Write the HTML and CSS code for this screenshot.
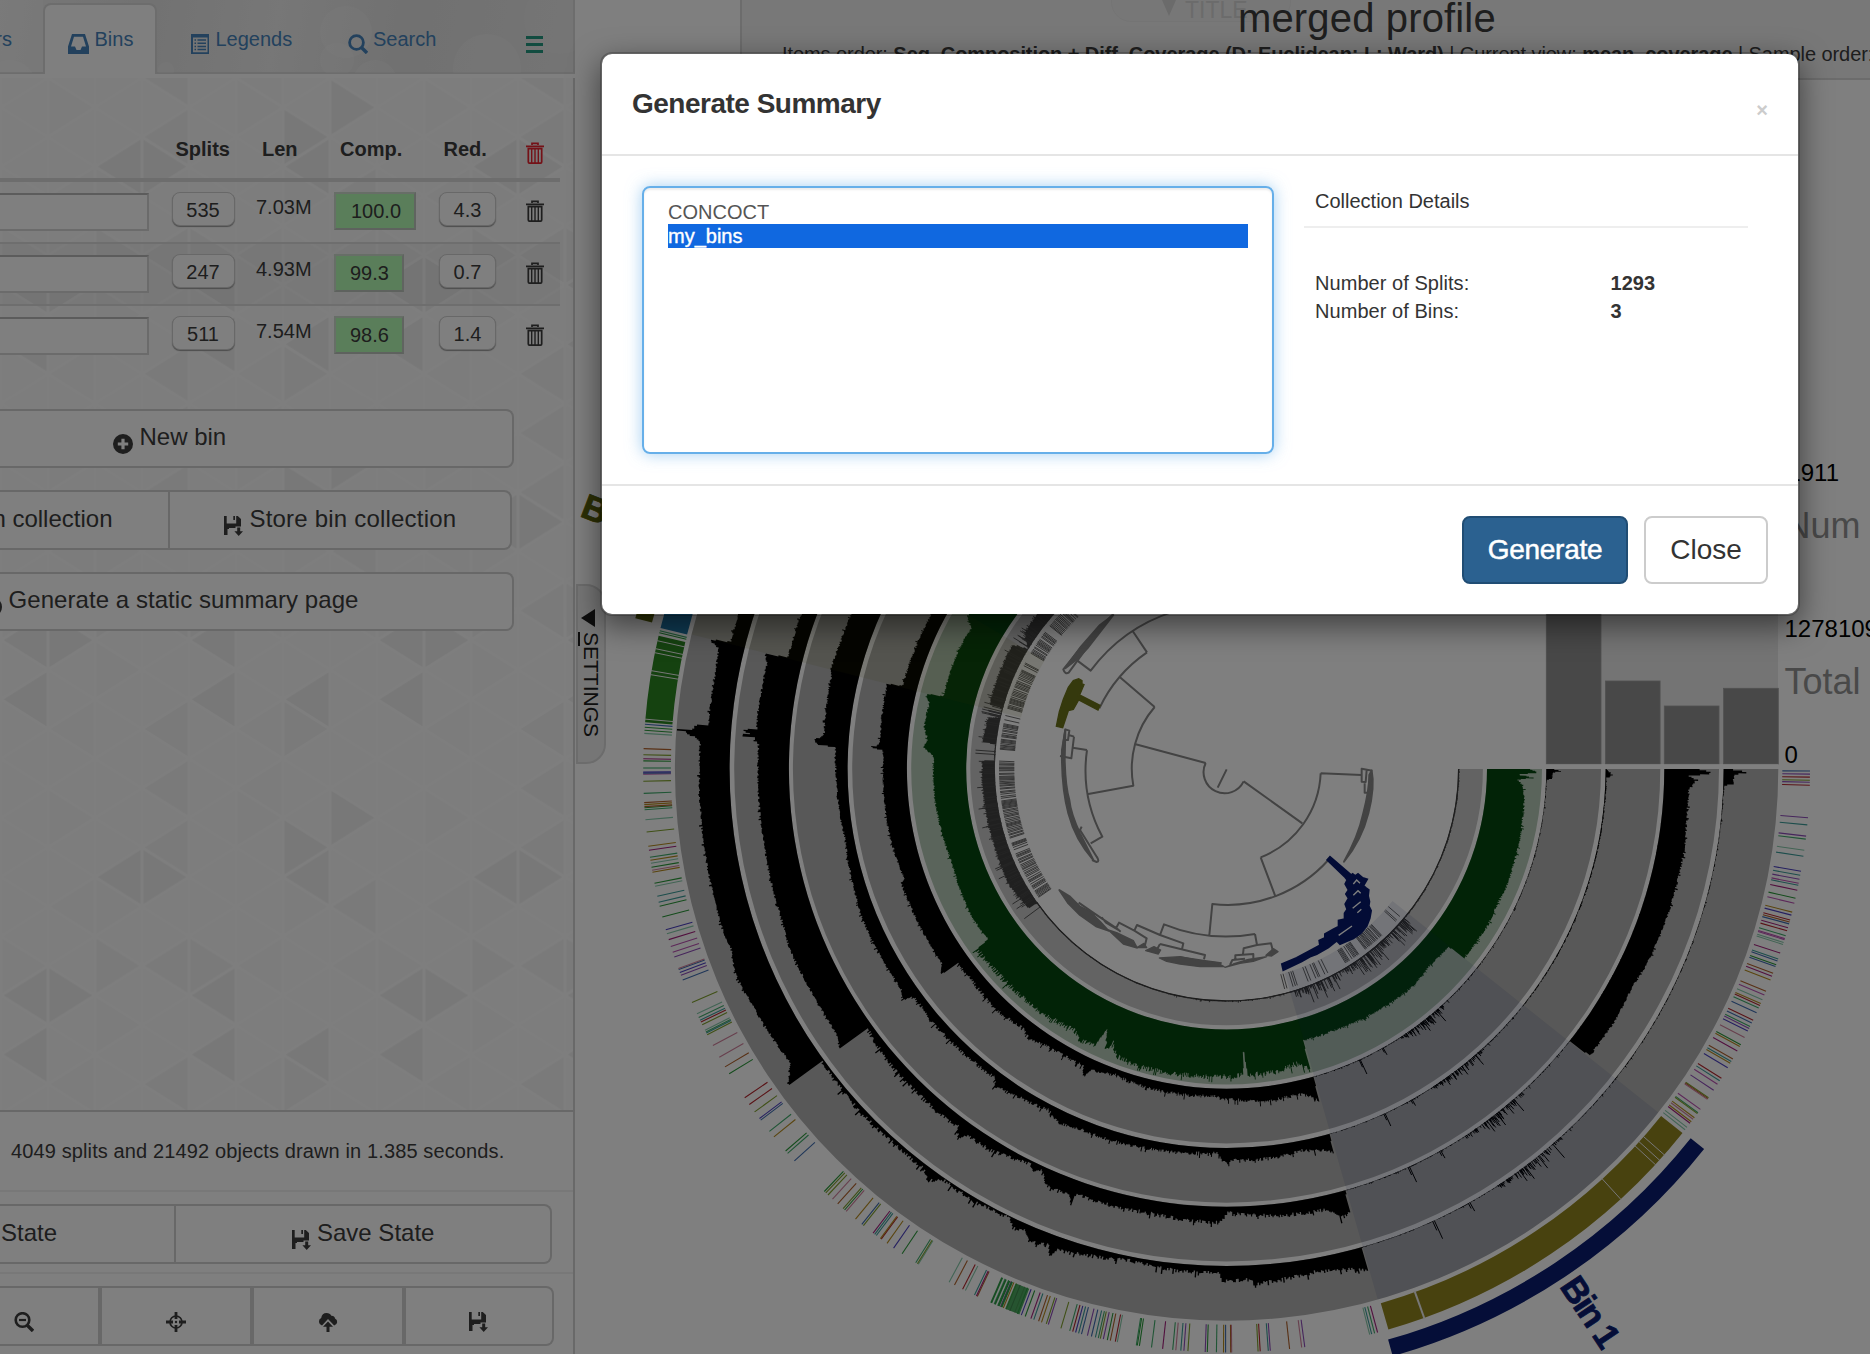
FILE: index.html
```
<!DOCTYPE html>
<html lang="en">
<head>
<meta charset="utf-8">
<title>merged profile</title>
<link rel="stylesheet" href="styles.css">
</head>
<body>
<svg class="defs" width="0" height="0" aria-hidden="true">
  <symbol id="i-trash" viewBox="0 0 18 22"><path fill="none" stroke="currentColor" stroke-width="1.7" d="M6 3V1.4h6V3M0 4.3h18M2.3 6.6V20q0 1.1 1.1 1.1h11.2q1.1 0 1.1-1.1V6.600z"/><path stroke="currentColor" stroke-width="1.4" d="M5.700 7v14M9 7v14M12.300 7v14"/></symbol>
  <symbol id="i-save" viewBox="0 0 20 20"><path fill="currentColor" d="M1 0h2.700v7.500h9.500V0h1.600L18 3v7.500h-5.500v1.500H6V13H4.500v6H1zM10.300 0h1.700v4h-1.700zM14.200 11.500h3v3.700H20L15.700 20l-4.300-4.800h2.800z"/></symbol>
</svg>

<main class="app">
  <section class="panel">
    <nav class="tabs">
      <svg class="bokeh" viewBox="0 0 575 73" width="575" height="73"><g fill="#fff" fill-opacity=".2"><circle cx="346" cy="32" r="26"/><circle cx="337" cy="60" r="17"/><circle cx="487" cy="68" r="34"/><circle cx="375" cy="82" r="22"/><circle cx="166" cy="70" r="8"/><circle cx="10" cy="86" r="26"/><circle cx="560" cy="18" r="36" fill-opacity=".1"/></g></svg>
      <span class="tab tab-layers">Layers</span>
      <span class="tab tab-bins"><svg viewBox="0 0 21 20" width="21" height="20"><path fill="currentColor" fill-rule="evenodd" d="M4 0h13l4 12.500V20H0v-7.500zM6 2.800L3 12.500h4l1.500 3.500h4l1.500-3.500h4L15 2.800z"/></svg>Bins</span>
      <span class="tab tab-legends"><svg viewBox="0 0 18.500 20" width="18.500" height="20"><path fill="currentColor" fill-rule="evenodd" d="M0 0h18.500v20H0zM2 3.500v14.700h14.500V3.500z"/><path stroke="currentColor" stroke-width="1.500" d="M3.500 6H5M6.500 6H15M3.500 9.200H5M6.500 9.200H15M3.500 12.400H5M6.500 12.400H15M3.500 15.600H5M6.500 15.600H15"/></svg>Legends</span>
      <span class="tab tab-search"><svg viewBox="0 0 20 20" width="20" height="20"><circle cx="8.500" cy="8.500" r="6.900" fill="none" stroke="currentColor" stroke-width="2.800"/><path stroke="currentColor" stroke-width="3.400" d="M13 13l6 6"/></svg>Search</span>
      <span class="menu"><i></i><i></i><i></i></span>
    </nav>

    <div class="content">
      <svg class="tiles" id="tiles" width="573" height="1032"></svg>
      <div class="bins">
        <div class="row head"><span></span><b class="h-splits">Splits</b><b class="h-len">Len</b><b class="h-comp">Comp.</b><b class="h-red">Red.</b><svg class="trash danger" width="18" height="22"><use href="#i-trash"/></svg></div>
        <div class="row"><span class="name"></span><span class="btn-sm splits">535</span><span class="len">7.03M</span><span class="comp wide">100.0</span><span class="btn-sm red">4.3</span><svg class="trash" width="18" height="22"><use href="#i-trash"/></svg></div>
        <div class="row even"><span class="name"></span><span class="btn-sm splits">247</span><span class="len">4.93M</span><span class="comp">99.3</span><span class="btn-sm red">0.7</span><svg class="trash" width="18" height="22"><use href="#i-trash"/></svg></div>
        <div class="row last"><span class="name"></span><span class="btn-sm splits">511</span><span class="len">7.54M</span><span class="comp">98.6</span><span class="btn-sm red">1.4</span><svg class="trash" width="18" height="22"><use href="#i-trash"/></svg></div>
      </div>
      <div class="actions">
        <div class="btn new"><svg width="20" height="20" viewBox="0 0 20 20"><circle cx="10" cy="10" r="10" fill="currentColor"/><path stroke="#fff" stroke-width="3.200" d="M10 4.800v10.400M4.800 10h10.400"/></svg>New bin</div>
        <div class="group">
          <div class="btn load">Load bin collection</div>
          <div class="btn store"><svg width="20" height="20"><use href="#i-save"/></svg>Store bin collection</div>
        </div>
        <div class="btn generate"><svg width="20" height="20" viewBox="0 0 20 20"><circle cx="10" cy="10" r="8" fill="none" stroke="currentColor" stroke-width="4"/></svg>Generate a static summary page</div>
      </div>
    </div>

    <footer class="foot">
      <p class="status">4049 splits and 21492 objects drawn in 1.385 seconds.</p>
      <div class="group states">
        <div class="btn load-state">State</div>
        <div class="btn save-state"><svg width="20" height="20"><use href="#i-save"/></svg>Save State</div>
      </div>
      <div class="tools">
        <div><svg width="20" height="20" viewBox="0 0 20 20"><circle cx="8.500" cy="8" r="6.800" fill="none" stroke="currentColor" stroke-width="2.600"/><path stroke="currentColor" stroke-width="3.400" d="M13 13l6 6"/><path stroke="currentColor" stroke-width="2.200" d="M5 8h7"/></svg></div>
        <div><svg width="20" height="20" viewBox="0 0 20 20"><circle cx="10" cy="10" r="6" fill="none" stroke="currentColor" stroke-width="1.700"/><path stroke="currentColor" stroke-width="2.800" d="M10 0v7M10 13v7M0 10h7M13 10h7"/><circle cx="10" cy="10" r="1.200" fill="currentColor"/></svg></div>
        <div><svg width="20" height="20" viewBox="0 0 20 20"><path fill="currentColor" d="M4 13.500a4 4 0 0 1-.8-7.500Q4 1 8.500 1q3.500 0 4.800 2.700 3.200-.2 3.700 2.800a3.700 3.700 0 0 1-.8 7L10 7z"/><path fill="currentColor" d="M10 9.500l5 5.200h-3.500V20h-3v-5.300H5z"/></svg></div>
        <div><svg width="20" height="20"><use href="#i-save"/></svg></div>
      </div>
    </footer>
  </section>

  <section class="stage">
    <svg class="plot" id="plot" viewBox="575 0 1295 1354" width="1295" height="1354"></svg>
    <div class="settings"><span class="arrow"></span><span class="vertical"><u>S</u>ETTINGS</span></div>
    <header class="title-bar">
      <div class="title-tab"><span class="down"></span>TITLE</div>
      <h1>merged profile</h1>
      <p>Items order: <b>Seq. Composition + Diff. Coverage (D: Euclidean; L: Ward)</b> | Current view: <b>mean_coverage</b> | Sample order: <b>custom</b></p>
    </header>
  </section>
</main>

<div class="backdrop"></div>

<div class="modal">
  <div class="modal-head"><h2>Generate Summary</h2><span class="close">×</span></div>
  <div class="modal-body">
    <div class="select"><div>CONCOCT</div><div class="selected">my_bins</div></div>
    <div class="details">
      <h3>Collection Details</h3>
      <dl><dt>Number of Splits:</dt><dd>1293</dd><dt>Number of Bins:</dt><dd>3</dd></dl>
    </div>
  </div>
  <div class="modal-foot"><span class="mbtn primary">Generate</span><span class="mbtn">Close</span></div>
</div>
<script src="plot.js"></script>
</body>
</html>
```
FILE: styles.css
```
* { box-sizing: border-box; }
body {
  margin: 0;
  width: 1870px;
  height: 1354px;
  overflow: hidden;
  background: #fff;
  color: #3c3c3c;
  font: 20px/28px "Liberation Sans", Arial, sans-serif;
}
h1, h2, h3, p, dl, dd { margin: 0; font-weight: normal; }
svg { display: block; flex: none; }
.defs { position: absolute; }
.app { display: flex; height: 1354px; }

/* settings panel */
.panel { width: 575px; flex: none; display: flex; flex-direction: column; overflow: hidden; }
.tabs {
  position: relative;
  height: 74px;
  flex: none;
  display: flex;
  background: linear-gradient(100deg, #f0f0f0, #e4e4e4 25%, #eee 48%, #e2e2e2 70%, #e9e9e9);
  border-bottom: 2px solid #dadada;
  border-right: 2px solid #d6d6d6;
}
.bokeh { position: absolute; left: 0; top: 0; }
.tab { position: relative; display: flex; color: #4683bb; white-space: nowrap; padding-top: 24.500px; }
.tab svg { margin-top: 9px; margin-right: 5.500px; }
.tab-layers { width: 42.500px; direction: rtl; padding-right: 30.500px; overflow: hidden; flex: none; background: rgba(255,255,255,.25); }
.tab-bins {
  width: 114.500px;
  height: 71px;
  flex: none;
  margin-top: 3px;
  padding: 20px 0 0 23.500px;
  background: #fff;
  border: 2px solid #dadada;
  border-bottom: 0;
  border-radius: 8px 8px 0 0;
  box-shadow: 0 3px 0 #fff;
}
.tab-legends { margin-left: 33.500px; width: 157px; }
.tab-legends svg { margin-right: 6.500px; }
.tab-search { width: 178px; }
.menu { position: relative; width: 17px; padding-top: 36px; display: flex; flex-direction: column; gap: 4px; }
.menu i { height: 3px; background: #249880; }

.content { position: relative; margin-top: 4px; height: 1032px; border-right: 2px solid #d2d2d2; }
.tiles { position: absolute; left: 0; top: 0; }
.bins, .actions { position: relative; }
.row {
  display: grid;
  grid-template-columns: 171.500px 84.500px 78px 105px 86.500px 34px;
  width: 560px;
  height: 62px;
  padding-top: 10px;
  border-bottom: 2px solid #dcdcdc;
}
.row.even { background: rgba(0,0,0,.035); }
.row.last { border-bottom: 0; }
.row.head { height: 104px; padding-top: 56.500px; border-bottom: 4px solid #dadada; }
.h-splits { padding-left: 4px; }
.h-len { padding-left: 6px; }
.h-comp { padding-left: 6px; }
.h-red { padding-left: 4.500px; }
.trash { margin-top: 8px; color: #3c3c3c; }
.trash.danger { color: #e8222e; margin-top: 7.500px; }
.name { width: 149px; height: 38px; margin-top: 1px; background: #fff; border: 2px solid #d6d6d6; border-top-color: #b8b8b8; border-left: 0; }
.btn-sm {
  width: 63px;
  height: 34px;
  padding-top: 2px;
  line-height: 31px;
  text-align: center;
  background: #fff;
  border: 1px solid #d0d0d0;
  border-radius: 8px;
  box-shadow: 0 1px 1px #999;
}
.btn-sm.red { width: 57px; }
.len { margin-top: 1px; }
.comp { width: 70px; height: 38px; padding: 1px 0 0 14px; line-height: 32px; background: #b4fcb4; border: 2px solid; border-color: #cfdccf #c0c8c0 #bcc4bc #cfdccf; }
.comp.wide { width: 81.500px; padding-left: 15px; }

.btn {
  display: flex;
  height: 59.500px;
  font-size: 24px;
  line-height: 34px;
  padding-top: 9.500px;
  white-space: nowrap;
  background: #fff;
  border: 2px solid #d0d0d0;
  border-left: 0;
  border-radius: 0 8px 8px 0;
}
.actions { display: flex; flex-direction: column; gap: 22px; padding-top: 40.500px; }
.group { display: flex; }
.group .btn:first-child { border-radius: 0; }
.btn svg { margin-top: 14px; }
.new { width: 514px; padding-left: 113px; gap: 6.500px; }
.load { width: 170px; justify-content: flex-end; padding-right: 55.500px; overflow: hidden; }
.store { width: 342px; padding-left: 52.500px; gap: 7px; letter-spacing: .2px; }
.generate { width: 514px; overflow: hidden; letter-spacing: .06px; }
.generate svg { margin-left: -18px; margin-right: 6.500px; }

.foot { flex: 1; border-top: 2px solid #d0d0d0; border-right: 2px solid #d2d2d2; }
.status { height: 80px; padding: 24.500px 0 0 11px; border-bottom: 2px solid #f0f0f0; white-space: nowrap; letter-spacing: .12px; }
.states { height: 82px; padding-top: 12px; border-bottom: 2px solid #f0f0f0; }
.load-state { width: 176px; padding-left: 1px; }
.save-state { width: 376px; padding-left: 114.500px; gap: 6.500px; }
.tools { display: flex; width: 554px; height: 60px; margin-top: 11.500px; border: 2px solid #d0d0d0; border-left: 0; border-radius: 0 8px 8px 0; background: #fff; }
.tools div { flex: none; width: 152px; padding: 24px 0 0 64px; border-right: 4px solid #d0d0d0; }
.tools div:first-child { width: 102px; padding-left: 14px; }
.tools div:last-child { width: 146px; border: 0; padding-left: 62px; }

/* drawing area */
.stage { position: relative; flex: 1; overflow: hidden; }
.plot { position: absolute; left: 0; top: 0; }
.settings {
  position: absolute;
  left: 1px;
  top: 584px;
  width: 30px;
  height: 180px;
  padding: 23px 0 0 2.500px;
  background: #ededed;
  border: 2px solid #d8d8d8;
  border-radius: 0 20px 20px 0;
  color: #1c1c1c;
}
.arrow { display: block; border: solid transparent; border-width: 9px 14px 9px 0; border-right-color: #1c1c1c; width: 0; }
.vertical { display: block; writing-mode: vertical-rl; margin: 5px 0 0 -1.500px; font-size: 21px; line-height: 24px; }
.title-bar {
  position: absolute;
  left: 165px;
  top: 0;
  width: 1130px;
  height: 80px;
  border: solid #d8d8d8;
  border-width: 0 0 2px 2px;
  background: #f1f1f1;
}
.title-bar h1 { position: absolute; left: 496px; top: -7px; font-size: 40px; line-height: 50px; white-space: nowrap; letter-spacing: .15px; }
.title-bar p { position: absolute; left: 40px; top: 40px; white-space: nowrap; letter-spacing: -.07px; }
.title-tab {
  position: absolute;
  left: 369px;
  top: -20px;
  width: 180px;
  height: 42px;
  padding: 15px 0 0 50px;
  display: flex;
  font-size: 23px;
  line-height: 28px;
  color: #d6d6d6;
  background: #efefef;
  border-radius: 0 0 20px 20px;
  border: 1px solid #e9e9e9;
}
.down { border: solid transparent; border-width: 16px 7.500px 0; border-top-color: #d6d6d6; height: 0; margin: 4px 9px 0 0; }

/* dialog */
.backdrop { position: absolute; left: 0; top: 0; width: 1870px; height: 1354px; background: rgba(0,0,0,.5); }
.modal {
  position: absolute;
  left: 600px;
  top: 52px;
  width: 1200px;
  height: 564px;
  background: #fff;
  background-clip: padding-box;
  border: 2px solid rgba(0,0,0,.2);
  border-radius: 12px;
  box-shadow: 0 10px 30px rgba(0,0,0,.5);
  color: #333;
}
.modal-head { display: flex; justify-content: space-between; height: 102px; padding: 30px 30px 0 30px; border-bottom: 2px solid #e5e5e5; }
.modal-head h2 { font-size: 28px; line-height: 40px; font-weight: bold; letter-spacing: -.5px; }
.close { font-size: 20px; font-weight: bold; color: #ccc; margin-top: 12px; }
.modal-body { display: flex; height: 330px; padding: 30px 0 0 40px; gap: 30px; border-bottom: 2px solid #e5e5e5; }
.select {
  width: 632px;
  height: 268px;
  padding: 12px 24px;
  line-height: 24px;
  color: #555;
  border: 2px solid #66afe9;
  border-radius: 8px;
  box-shadow: inset 0 2px 2px rgba(0,0,0,.075), 0 0 16px rgba(102,175,233,.6);
}
.selected { background: #1068e0; color: #fff; -webkit-text-stroke: .4px #fff; }
.details h3 { width: 444px; height: 42px; padding: 1px 0 0 11px; font-size: 20px; border-bottom: 2px solid #eee; }
.details dl { display: grid; grid-template-columns: 295.500px 100px; padding: 40.500px 0 0 11px; letter-spacing: .05px; }
.details dd { font-weight: bold; }
.modal-foot { display: flex; justify-content: flex-end; gap: 16px; padding: 30px 30px 0 0; }
.mbtn { height: 68px; width: 124px; text-align: center; font-size: 28px; line-height: 64px; border: 2px solid #ccc; border-radius: 8px; }
.mbtn.primary { width: 166px; background: #2b6190; border-color: #204d74; color: #fff; letter-spacing: -.3px; -webkit-text-stroke: .5px #fff; }
```
FILE: plot.js
```
// Circular phylogram: angles are in degrees, clockwise from the positive x axis.
const CX = 1226.6, CY = 769, RAD = Math.PI / 180;
let seed = 7;
const rnd = () => (seed = (seed * 16807) % 2147483647) / 2147483647;
const pt = (a, r) => (CX + r * Math.cos(a * RAD)).toFixed(1) + ' ' + (CY + r * Math.sin(a * RAD)).toFixed(1);
const out = [];
const path = (d, attrs) => out.push(`<path d="${d}" ${attrs}/>`);

function sector(a0, a1, r0, r1, attrs) {
  const big = a1 - a0 > 180 ? 1 : 0;
  path(`M${pt(a0, r0)}L${pt(a0, r1)}A${r1} ${r1} 0 ${big} 1 ${pt(a1, r1)}L${pt(a1, r0)}A${r0} ${r0} 0 ${big} 0 ${pt(a0, r0)}Z`, attrs);
}
function heightAt(keys, a) {
  for (let i = 2; i < keys.length; i += 2) {
    if (a <= keys[i]) {
      const t = (a - keys[i - 2]) / (keys[i] - keys[i - 2] || 1);
      return keys[i - 1] + t * (keys[i + 1] - keys[i - 1]);
    }
  }
  return keys[keys.length - 1];
}
function profile(r0, max, keys, fill, rough) {
  const end = keys[keys.length - 2], step = 0.16;
  let d = 'M' + pt(0, r0);
  for (let a = 0; a < end; a += step) {
    let h = heightAt(keys, a);
    const j = h < 2 ? 0.5 : a > 74.4 && a < 144 ? rough : 0.9;
    h += (rnd() - 0.5) * 2 * j;
    if (h > 2 && rnd() < 0.06) h += j * 2;
    h = Math.max(0.2, Math.min(max, h));
    d += `L${pt(a, r0 + h)}L${pt(a + step, r0 + h)}`;
  }
  d += `L${pt(end, r0)}A${r0} ${r0} 0 1 0 ${pt(0, r0)}Z`;
  path(d, `fill="${fill}"`);
}
function needles(r0, list, color, w) {
  path(list.map(([a, h]) => `M${pt(a, r0)}L${pt(a, r0 + h)}`).join(''), `stroke="${color}" stroke-width="${w}" fill="none"`);
}

// track backgrounds
sector(0, 270, 231.7, 256.3, 'fill="#c6c6c6"');
sector(0, 270, 260.4, 315.4, 'fill="#b5c9b7"');
for (const r of [319.7, 379, 437.7, 497]) sector(0, 270, r, r + 54.7, 'fill="#b1b1b1"');

// track profiles: angle, height pairs
const green = [0,44,0.6,51,1,30,1.6,46,2,30,3,36,6.3,39,13.6,41,23,43,26,42,31.3,44,38.4,43,38.6,24,44.8,22,48.7,26,56.7,25,60.5,24,61,28,61.5,24,69,22,74.2,22,74.4,50,76.6,42,80.7,47,86,46,86.5,20,86.9,46,88.8,47,95,48,100,49,107.5,50,111,46,112.5,36,113,46,114.7,27,115.3,46,118.4,48,120,42,127.4,46,134.9,46,144.1,48,144.4,33,150.6,34,161,30,166,31,173.9,33,182.4,33,184,43,185.5,40,187.9,45,192.4,44,194,49,194.3,32,203.9,33,209,31,210.4,41,212,37,240,38];
profile(260.4, 54, green, '#04460f', 2.6);
profile(319.7, 54, [0,8,0.3,15,0.6,6,1.7,6,1.8,0.4,74.2,0.3,74.3,26,75.2,20,76.9,14,80,14,83.900,15,88.4,11,91,11,91.2,8,99.3,9,107.3,8,110,6,114,10,115,21,115.6,10,117.3,10,122,10,126.2,15,128,10,134,14,138.5,12,144,11,144.2,33,145.7,25,160.6,25,161,21,170.3,24,183,24,183.3,34,183.5,38,183.7,30,184,29,184.8,28,188.6,29,193.6,30,194,32,194.3,15,202.2,14,240,12], '#000', 1.7);
profile(379, 54, [0,2,0.9,7,1.2,1,74.2,0.3,74.3,20,75.5,15,78.7,10,83.5,13,89.4,12,89.7,19,90,13,90.6,14,91.2,5,98,8,107.3,10,112,10,115,13,117.5,6,123,10,126,14,127,7,133.6,9,139,9,144,8,144.4,19,145.8,14,157.5,15,161,13,169.5,9,180,12,183.1,13,183.3,29,183.7,34,184.1,34,184.4,27,185,25,193.1,27,194,29,200.4,27,240,25], '#000', 1.7);
profile(437.7, 54, [0,35,0.4,50,0.8,25,1.3,32,2.3,25,5.8,25,9.7,27,14.3,27,19.5,27,25.4,25,28.2,23,33.3,25,38.2,25,38.4,0.3,74.2,0.3,74.4,22,75.6,26,77,14,83.7,12,89.7,6,90.8,16,95.600,15,100.2,13,104.5,14,109.3,13,109.7,24,110.4,15,112.6,18,114,11,114.7,2,115.4,9,116.3,3,121.7,11,125,11,126,19,126.8,10,130,11,135,10,139,10,144,6,144.1,40,145.4,34,150.6,33,157.5,35,160.900,32,171.3,31,183,31,183.4,36,183.7,35,183.9,53,184.1,40,184.6,46,184.8,34,193,34,193.9,38,194.2,15,240,15], '#000', 2);
profile(497, 54, [0,10,0.3,24,0.6,10,1.7,10,1.8,1,3,0.4,74.1,0.3,74.2,24,76,18,80,14,84.5,17,86.5,18,86.7,25,87,14,90.5,15,90.8,6,96,7,101,4,106,9,109.2,11,109.9,21,110.5,11,112.5,15,113.5,7,114.7,10,115.8,2,121,4,124.5,2,125.9,12,127,5,131,4,137.4,5,140.8,4,144,2,144.1,43,146,29,157.6,35,160,30,162,32,173.4,31,182.8,30,183.3,34,183.600,43,183.8,43,184,54,184.200,36,184.6,38,184.8,23,190.6,23,193.2,25,194,35,194.3,15,240,14], '#000', 2);

// sparse coverage inside Bin 1
for (const [r, k] of [[319.7, 8], [379, 7], [437.7, 8.5], [497, 10]]) {
  const list = [[60.7, k], [60.9, k * 0.6], [65.3, k * 2], [65.5, k], [49, k * 1.8], [41, 2], [46.4, 3]];
  for (let i = 0; i < 75; i++) {
    const a = 47.5 + rnd() * 9.5, bump = Math.exp(-Math.pow((a - 52) / 3.3, 2));
    list.push([a, 1 + rnd() * rnd() * k * 1.7 * bump + rnd() * 2]);
  }
  for (let i = 0; i < 40; i++) list.push([3 + rnd() * 68, rnd() * 1.8]);
  needles(r, list, '#000', 1);
}

// innermost bar track
path(`M${pt(0, 232)}A232 232 0 0 1 ${pt(145, 232)}`, 'fill="none" stroke="#303030" stroke-width="1.2"');
profile(231.7, 24, [0,1,144.6,0.4,144.8,10,152,15,162,13,172,13,181.9,13,182,1,186,1,186.2,14,192,12,192.8,1,195,1,195.200,14,210,16,211,1,214,12,222,14,240,14], '#404040', 1);
{
  const l = [];
  for (let i = 0; i < 70; i++) { const a = 146 + rnd() * 36; l.push([a, 10 + rnd() * rnd() * 14]); }
  for (let i = 0; i < 60; i++) { const a = 186 + rnd() * 40; l.push([a, 10 + rnd() * rnd() * 13]); }
  for (const a of [143.5, 183.6, 184.3, 193.2, 193.8]) l.push([a, 20]);
  needles(231.7, l, '#484848', 0.9);
  const m = [];
  for (let i = 0; i < 170; i++) {
    const a = 40 + rnd() * 33, d = Math.min(Math.abs(a - 42), Math.abs(a - 53), Math.abs(a - 66));
    m.push([a, 2 + rnd() * (d < 3.5 ? 17 : 7)]);
  }
  for (let i = 0; i < 25; i++) m.push([75 + rnd() * 30, 0.5 + rnd() * 2]);
  needles(231.7, m, '#333', 0.9);
}
// barcode track
{
  let d = '';
  const bar = a => { d += `M${pt(a, 212.3)}L${pt(a, 227.6)}`; };
  const fill = (a0, a1, gap) => { for (let a = a0; a < a1; a += 0.22 + rnd() * rnd() * gap) bar(a); };
  fill(145.7, 158.4, 0.55); fill(159.2, 161, 0.5); fill(162.3, 182, 0.5); fill(185, 191.5, 0.45);
  fill(195.5, 206, 0.45); fill(207, 208.3, 0.8); fill(210.6, 217, 0.5); fill(219, 226, 0.45);
  for (const a of [192.5, 193.6, 75.2, 74.6, 73, 72.4, 71.9, 69, 68.3, 66.9, 66.2, 65.8, 64.4, 63.6, 40.4, 41.600, 42]) bar(a);
  fill(47, 52.5, 0.4); fill(54.5, 58.5, 0.7);
  path(d, 'stroke="#505050" stroke-width="0.85" fill="none"');
}

// bin highlights
sector(38.5, 74.1, 212, 551.7, 'fill="#14286e" fill-opacity=".1"');
sector(194.1, 210.8, 212, 551.7, 'fill="#5e6400" fill-opacity=".1"');

// taxonomy track
sector(38.6, 73.9, 556, 583.4, 'fill="#91841f"');
sector(194, 203, 556, 583.4, 'fill="#1f76a8"');
sector(184.6, 193.2, 556, 583.4, 'fill="#2a8420"');
for (const [a, w] of [[41.4,1],[42.1,1],[42.7,1],[47.5,1],[70.2,2],[184.9,1],[189.3,1],[189.700,1],[191.5,1],[191.9,1],[192.7,1]])
  path(`M${pt(a, 555)}L${pt(a, 584)}`, `stroke="#eee" stroke-width="${w}"`);
const hues = ['#b84fb0', '#3faa6a', '#b3252c', '#4a3fc0', '#b58a1e', '#3a9b98', '#a3207c', '#7fa02c', '#3e6cb0', '#cf7f9b', '#299838', '#8d4bb8', '#b0602a', '#84c8a8'];
const marks = '0.2 0.5 0.8 1.1 1.3 1.6 4.8 5.500 6.600 6.9 8 8.6 10.1 10.5 10.9 11.3 11.5 12 12.8 13.3 14.2 14.5 15 15.2 15.4 15.8 16.1 16.6 16.9 17 17.3 17.5 18.4 19 19.2 19.6 19.8 20.5 20.8 21.2 22.4 22.8 23.300 23.7 23.9 24.2 24.7 25.5 25.8 26.2 26.4 26.7 27.4 28.2 28.4 28.9 29.8 30.1 30.3 30.8 32 32.3 32.7 33.4 34.3 34.4 34.5 35.7 36.1 36.2 36.7 36.9 37.2 37.4 37.9 38.2 75 75.3 75.6 75.8 82.3 82.6 83.8 85.7 85.900 86.7 86.9 89.5 89.6 90.1 90.3 91 91.9 92.1 93.8 94.2 94.5 95 95.3 96.3 97.4 98.6 98.8 98.9 100.8 101 101.5 101.8 102.2 102.5 102.7 103 103.4 103.8 104.4 104.7 105 105.3 105.6 106.5 107.8 108 108.5 108.8 109.3 109.6 110.2 110.6 111 111.3 111.8 112.2 112.5 112.8 113.1 113.5 115.3 115.4 115.6 116.6 116.9 117.8 118.4 121.9 122 122.2 123.8 124.800 125.6 126.3 126.4 126.9 127.1 127.3 128.5 128.7 129.5 130.7 130.9 131.1 131.8 132.5 133.1 133.4 133.6 137.800 138.8 139.1 140.9 141.6 143 143.200 144 144.9 145.7 148.5 149.3 150.4 151.7 152.9 153.1 153.2 153.4 154 154.3 154.5 154.8 155.2 156.4 158.8 159.3 159.6 159.9 160 161.2 161.7 162.3 163 163.6 164 165.3 166.4 166.8 167.4 168.4 168.7 169.800 170 170.3 170.7 171 171.3 172 172.4 173.8 175 176 176.2 176.3 176.5 176.7 177.6 178.8 179.5 179.6 179.7 180.1 180.8 181 181.4 182 183.5 183.8 184.1 184.4 193.500 193.7'.split(' ');
marks.forEach(m => path(`M${pt(+m, 555.7)}L${pt(+m, 583.4)}`, `stroke="${hues[Math.floor(rnd() * hues.length)]}" stroke-width="1.1"`));
sector(110.8, 112.3, 556, 583.4, 'fill="#2d9a45" fill-opacity=".85"');
for (const a of [113, 113.4, 113.8, 112.7]) path(`M${pt(a, 556)}L${pt(a, 583.4)}`, 'stroke="#2d9a45" stroke-width="2"');

// bin labels
sector(38.5, 74.2, 593, 610.2, 'fill="#0a1c70"');
sector(194.3, 212, 593, 610.2, 'fill="#59600a"');
out.push('<text x="1559" y="1286.500" transform="rotate(56.4 1559 1286.5)" font-size="35" font-weight="bold" letter-spacing="-2" fill="#0a1c70" stroke="#0a1c70" stroke-width=".8">Bin 1</text>');
out.push('<text x="579" y="516" transform="rotate(21 579 516)" font-size="35" font-weight="bold" fill="#59600a" stroke="#59600a" stroke-width=".8">Bin 2</text>');

// dendrogram, drawn on a 3x grid
out.push('<g transform="translate(1000 600) scale(.33333)" fill="none" stroke="#868686" stroke-width="6" stroke-linejoin="round">');
path('M680 508L653 563M617 489A62 62 0 0 0 731 544M731 544L907 670M962 520A283 283 0 0 1 782 772M962 520L1085 525M782 772L825 886M985 780A406 406 0 0 1 637 912L628 1005M765 1002A499 499 0 0 1 492 973L480 1005M765 1002L771 1035', '');
path('M617 489L407 433M464 321A283 283 0 0 0 400 557L265 582M464 321L360 232M441 157A422 422 0 0 0 298 325M441 157L398 93M520 35A500 500 0 0 0 272 212L232 182M261 450A423 423 0 0 0 307 710L272 730M261 450L218 443', '');
path('M1117 512L1085 506L1085 545L1097 546L1100 510M1094 550V578L1104 578M340 42L245 140L190 208Q195 224 206 218L257 148M222 410L214 475L180 468M222 410L206 405L208 392L196 388L190 430M206 405L204 420L196 420M245 680L240 690L290 770Q300 785 290 786L276 780', '');
path('M1115 512Q1125 560 1105 640T1032 785Q1075 710 1090 640Q1108 570 1108 525Z', 'fill="#868686"');
path('M340 45L300 75L243 140L195 205L228 180L262 145Z', 'fill="#868686"');
path('M196 390L186 450Q184 560 205 640T280 780L240 700Q212 640 208 600Q196 560 194 480Z', 'fill="#868686"');
path('M178 870L210 890L240 920L270 935L300 965L325 992L290 980L240 945L205 910Z', 'fill="#868686"');
path('M236 908L275 935L305 955L350 985L362 995M273 935L285 955M305 952L318 968L355 990M348 985L357 968L403 992M403 992L440 1015L435 1035M403 992L411 975L480 1005L550 1030L546 1048M480 1032L470 1050M480 1032L615 1065L612 1078M771 1035L731 1045L729 1062M771 1035L813 1030L818 1050M706 1080V1066L760 1062V1075M690 1095L697 1080L735 1076M540 1083V1072L610 1082L665 1090', '');
path('M325 990L350 998L400 1022L412 1044L370 1032ZM412 1042L432 1030L440 1043ZM437 1052L462 1040L482 1050L475 1062ZM478 1074L540 1070L610 1084L650 1088L672 1100L600 1100L540 1092L500 1084ZM675 1102L700 1092L745 1078L800 1070L760 1084L720 1090ZM798 1066L820 1046L834 1055L815 1068Z', 'fill="#868686" stroke-width="4"');
out.push('</g><g transform="translate(1000 600) scale(.33333)" fill="#6b721a" stroke="#6b721a" stroke-width="4">');
path('M232 288L238 284L300 316L294 330L236 300L220 328L205 332L188 383L169 379L178 335L190 298L205 262L220 242L236 236L246 242V252L252 254L240 282Z', '');
out.push('</g><g transform="translate(1000 600) scale(.33333)" fill="#07196c" stroke="#07196c" stroke-width="6" stroke-linejoin="miter">');
path('M982 780L990 771L1054 826L1058 822L1066 828L1074 822L1088 834L1101 838L1090 857L1084 852L1098 864L1106 870L1104 888L1108 905L1106 918L1113 932L1109 955L1100 978L1082 1000L1060 1015L1020 1032L1010 1022L985 1042L950 1062L930 1070L905 1084L850 1110L846 1092L890 1074L925 1055L960 1036L958 1022L975 1014V1002L1000 988L1016 980V962L1034 958L1034 940L1042 928L1036 912L1046 895L1038 882L1046 870L1036 852L1042 840L1036 832Z', '');
path('M1060 852L1070 840L1080 850M1060 886L1074 872L1082 880M1058 925L1082 905M1072 938L1084 928M1016 1006L1056 978', 'fill="none" stroke="#fff" stroke-width="4"');
out.push('</g>');

// sample bar charts
out.push('<rect x="1546" y="400" width="232" height="364" fill="#e8e8e8"/>');
[[1546.3, 470], [1605.4, 681], [1664.3, 706], [1723.6, 688.3]].forEach(([x, y]) =>
  out.push(`<rect x="${x}" y="${y}" width="54.700" height="${764 - y}" fill="#919191" stroke="#a0a0a0" stroke-width=".8"/>`));
out.push('<rect x="1546" y="764.4" width="232" height="4.200" fill="#fff"/>');
out.push('<g font-size="24" fill="#000"><text x="1839" y="481" text-anchor="end">1911</text><text x="1784.500" y="637">1278109530</text><text x="1784.500" y="763">0</text></g>');
out.push('<g font-size="36" fill="#929292"><text x="1784.500" y="538">Num</text><text x="1784.500" y="694" font-size="36">Total</text></g>');
document.getElementById('plot').innerHTML = out.join('');

// triangle wallpaper: [direction, column, row in half edges, shade]
const W = 47, H = 29.6, tri = [
  ['L',0,2,2],['L',4,2,2],['L',6,2,2],['L',3,3,1],['L',5,3,0],['R',6,3,1],['L',3,5,1],['L',5,5,0],['R',5,6,0],['R',7,6,2],
  ['L',3,7,1],['R',6,7,2],['L',2,8,2],['R',3,8,2],['L',6,8,2],['R',2,11,1],['L',3,11,1],['R',4,11,1],['L',5,11,0],['L',7,11,0],
  ['R',0,11,0],['L',0,12,2],['R',1,12,2],['L',4,12,2],['L',7,9,1],['L',1,9,0],['R',6,9,0],['R',2,9,0],['L',1,3,0],['R',2,1,0],['R',1,6,0]];
const shades = ['#f8f8f8', '#f5f5f5', '#f1f1f1'];
let p = '';
for (const [dir, c, r, s] of tri) {
  for (const rr of r === 12 ? [0, 12] : [r]) {
    const y = rr * H, x0 = c * W, x1 = x0 + W;
    const d = dir === 'L' ? `M${x0} ${y}L${x1} ${y - H}V${y + H}Z` : `M${x1} ${y}L${x0} ${y - H}V${y + H}Z`;
    p += `<path d="${d}" fill="${shades[s]}"/>`;
  }
}
let lines = '';
for (let c = 0; c <= 8; c++) lines += `M${c * W} 0V${12 * H}`;
for (let r = -8; r <= 12; r += 2) lines += `M0 ${r * H}L${8 * W} ${(r + 8) * H}M0 ${(r + 8) * H}L${8 * W} ${r * H}`;
document.getElementById('tiles').innerHTML =
  `<defs><pattern id="tp" x="1" y="207" width="${8 * W}" height="${12 * H}" patternUnits="userSpaceOnUse"><rect width="400" height="400" fill="#fafafa"/>${p}<path d="${lines}" stroke="#fdfdfd" stroke-width="3" fill="none"/></pattern></defs><rect width="573" height="1032" fill="url(#tp)"/>`;
```
